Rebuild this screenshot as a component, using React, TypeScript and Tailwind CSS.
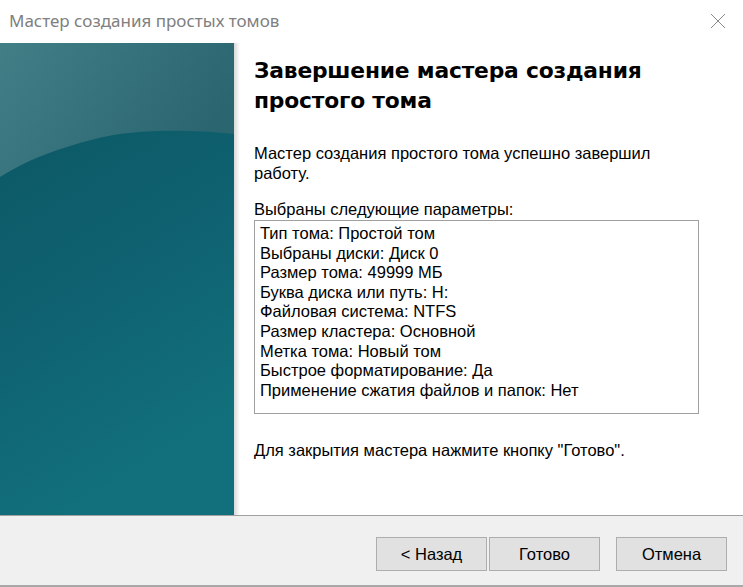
import React from 'react';

const params = [
  'Тип тома: Простой том',
  'Выбраны диски: Диск 0',
  'Размер тома: 49999 МБ',
  'Буква диска или путь: H:',
  'Файловая система: NTFS',
  'Размер кластера: Основной',
  'Метка тома: Новый том',
  'Быстрое форматирование: Да',
  'Применение сжатия файлов и папок: Нет',
];

const SidePanel: React.FC = () => (
  <div className="relative w-[234px] shrink-0">
    <svg className="block w-full h-full" viewBox="0 0 234 472" preserveAspectRatio="none">
      <defs>
        <linearGradient id="low" x1="0" y1="0" x2="0.3" y2="1">
          <stop offset="0" stopColor="#0b5562" />
          <stop offset="0.6" stopColor="#0f6271" />
          <stop offset="1" stopColor="#11707b" />
        </linearGradient>
        <linearGradient id="high" x1="0" y1="0" x2="1" y2="0.4">
          <stop offset="0" stopColor="#417e86" />
          <stop offset="1" stopColor="#2b6670" />
        </linearGradient>
      </defs>
      <rect x="0" y="0" width="234" height="472" fill="url(#low)" />
      <path d="M0 0 H234 V91 C190 86 130 86 95 96 C55 106 25 118 0 134 Z" fill="url(#high)" />
    </svg>
    <div className="absolute top-0 right-[-6px] w-[6px] h-full bg-gradient-to-r from-[#d8d8d8] to-white" />
  </div>
);

const Button: React.FC<{ label: string; className?: string }> = ({ label, className = '' }) => (
  <button className={`h-[34px] w-[111px] bg-[#e1e1e1] border border-[#adadad] text-[16.5px] text-black ${className}`}>
    {label}
  </button>
);

export default function App() {
  return (
    <div className="w-[743px] h-[587px] bg-white flex flex-col overflow-hidden" style={{ fontFamily: '"Liberation Sans", Arial, sans-serif' }}>
      <div className="h-[43px] shrink-0 flex items-center justify-between pl-[9px] pr-[17px]">
        <span className="text-[17px] text-[#808080] pb-[2px]" style={{ fontFamily: '"Noto Sans", sans-serif' }}>
          Мастер создания простых томов
        </span>
        <svg width="16" height="16" viewBox="0 0 16 16" className="mb-[2px]">
          <path d="M1 1 L15 15 M15 1 L1 15" stroke="#8a8a8a" strokeWidth="1" fill="none" />
        </svg>
      </div>
      <div className="flex h-[472px] shrink-0">
        <SidePanel />
        <div className="flex-1 pl-[20px] pr-[44px]">
          <h1 className="mt-[13px] text-[21.8px] leading-[30px] font-bold text-black tracking-[-0.2px]" style={{ fontFamily: '"DejaVu Sans", Verdana, sans-serif' }}>
            Завершение мастера создания<br />простого тома
          </h1>
          <p className="mt-[27px] text-[16.5px] leading-[20px] text-black">
            Мастер создания простого тома успешно завершил<br />работу.
          </p>
          <p className="mt-[16px] text-[16.5px] leading-[20px] text-black">Выбраны следующие параметры:</p>
          <div className="mt-[1px] h-[194px] border border-[#a0a0a0] pt-[3px] pl-[5px]">
            {params.map((p) => (
              <div key={p} className="text-[16.5px] leading-[19.6px] text-black">{p}</div>
            ))}
          </div>
          <p className="mt-[26px] text-[16.5px] leading-[20px] text-black">
            Для закрытия мастера нажмите кнопку "Готово".
          </p>
        </div>
      </div>
      <div className="flex-1 bg-[#f0f0f0] border-t border-[#a0a0a0] flex items-start pt-[21px] pl-[376px]">
        <Button label="< Назад" />
        <Button label="Готово" className="ml-[2px]" />
        <Button label="Отмена" className="ml-[16px]" />
      </div>
      <div className="h-[2px] bg-[#a8a8a8] shrink-0" />
    </div>
  );
}
